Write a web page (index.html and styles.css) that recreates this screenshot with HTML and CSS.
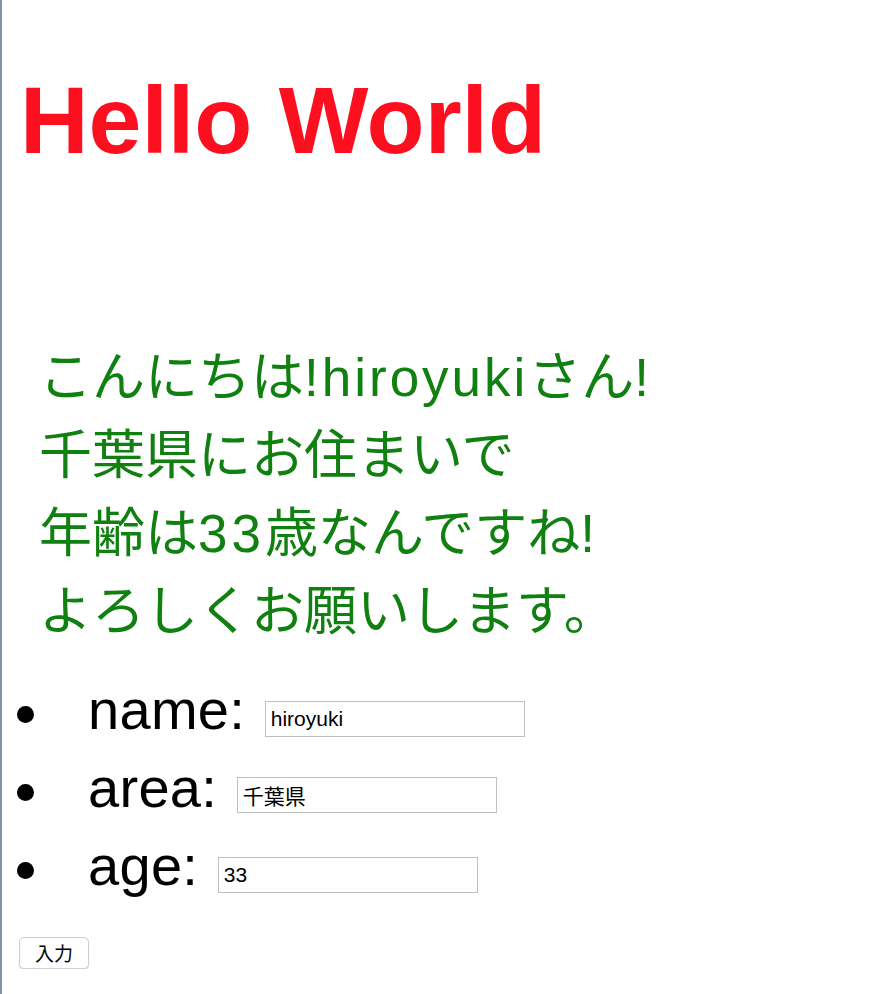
FILE: index.html
```html
<!DOCTYPE html>
<html lang="ja">
<head>
<meta charset="utf-8">
<title>Hello World</title>
<link rel="stylesheet" href="styles.css">
</head>
<body>
<div class="page">
  <h1 class="title">Hello World</h1>
  <p class="greeting">こんにちは<span class="latin">!hiroyuki</span>さん<span class="latin">!</span><br>千葉県にお住まいで<br>年齢は<span class="latin digits">33</span>歳なんですね<span class="latin">!</span><br>よろしくお願いします。</p>
  <ul class="fields">
    <li class="field"><span class="label">name:</span> <input class="text-input" type="text" value="hiroyuki"></li>
    <li class="field"><span class="label">area:</span> <input class="text-input" type="text" value="千葉県"></li>
    <li class="field"><span class="label">age:</span> <input class="text-input" type="text" value="33"></li>
  </ul>
  <button class="submit" type="button">入力</button>
</div>
</body>
</html>
```

FILE: styles.css
```css
html {
  border-left: 2px solid #8391a0;
  background: #ffffff;
  min-height: 100%;
}

body {
  margin: 0;
  font-family: "Liberation Sans", "Noto Sans CJK JP", sans-serif;
  color: #000000;
}

.page {
  padding-left: 13px;
}

.title {
  margin: 72px 0 0 5px;
  font-family: "Liberation Sans", "Noto Sans CJK JP", sans-serif;
  font-weight: bold;
  font-size: 95px;
  line-height: 96px;
  height: 96px;
  color: #fc0f1f;
}

.greeting {
  margin: 171px 0 0 24px;
  font-family: "Liberation Sans", "Noto Sans CJK JP", sans-serif;
  font-size: 53px;
  line-height: 78px;
  color: #108010;
}

.latin {
  letter-spacing: 3px;
}

.digits {
  letter-spacing: 4px;
}

.fields {
  list-style: none;
  margin: 20px 0 0 2px;
  padding: 0;
}

.field {
  font-size: 56px;
  line-height: 78px;
  height: 78px;
  white-space: nowrap;
}

.field::before {
  content: "";
  display: inline-block;
  width: 17px;
  height: 17px;
  border-radius: 50%;
  background: #000000;
  vertical-align: middle;
  margin-right: 54px;
}

.label {
  letter-spacing: 0.3px;
}

.text-input {
  box-sizing: border-box;
  width: 260px;
  height: 36px;
  margin: 0 0 0 4px;
  padding: 0 5px;
  border: 1px solid #c0c0c0;
  border-radius: 0;
  font-family: "Liberation Sans", "Noto Sans CJK JP", sans-serif;
  font-size: 21px;
  color: #000000;
  background: #ffffff;
  vertical-align: 3px;
}

.submit {
  display: block;
  margin: 32px 0 0 4px;
  box-sizing: border-box;
  width: 70px;
  height: 32px;
  padding: 0;
  border: 1px solid #cfcfcf;
  border-radius: 5px;
  background: #ffffff;
  box-shadow: 0 1px 1px rgba(0, 0, 0, 0.15);
  font-family: "Noto Sans CJK JP", sans-serif;
  font-size: 19px;
  line-height: 30px;
  color: #000000;
}
```
